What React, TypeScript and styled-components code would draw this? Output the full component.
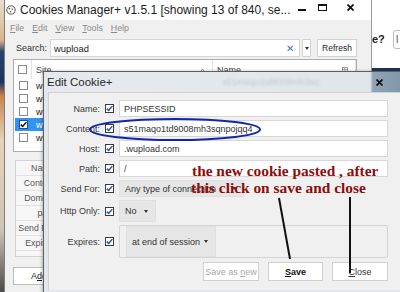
import React from "react";
import styled, { createGlobalStyle } from "styled-components";

const GlobalStyle = createGlobalStyle`
  html, body { margin: 0; padding: 0; background: #fff; }
  * { box-sizing: border-box; }
`;

const Stage = styled.div`
  position: relative;
  width: 400px;
  height: 292px;
  overflow: hidden;
  display: flex;
  font-family: "Liberation Sans", Arial, sans-serif;
  color: #333;
`;

const Desktop = styled.div`
  flex: none;
  width: 4px;
  background: linear-gradient(
    180deg,
    #e8ddd0 0px,
    #d9b58e 40px,
    #27436f 52px,
    #1c355e 82px,
    #c9844a 96px,
    #e4d2bc 140px,
    #cfc4b6 230px,
    #4a4a4a 292px
  );
`;

/* ---------- main window ---------- */

const Window = styled.div`
  flex: none;
  width: 368px;
  display: flex;
  flex-direction: column;
  background: #f0f0f0;
  border-left: 1px solid #7d7d7d;
  border-right: 1px solid #9a9a9a;
`;

const TitleBar = styled.div`
  height: 20px;
  display: flex;
  align-items: center;
  background: #fff;
`;

const AppIcon = styled.svg`
  flex: none;
  margin-left: 1px;
`;

const Title = styled.span`
  flex: 1 1 auto;
  min-width: 0;
  margin-left: 4px;
  font-size: 12px;
  color: #1b1b1b;
  white-space: nowrap;
  overflow: hidden;
`;

const Controls = styled.div`
  flex: none;
  display: flex;
  padding-right: 11px;
`;

const Ctl = styled.div<{ $gap?: number }>`
  width: 20px;
  height: 20px;
  margin-left: ${(p) => p.$gap ?? 0}px;
  display: flex;
  align-items: center;
  justify-content: center;
`;

const MinGlyph = styled.span`
  width: 8px;
  height: 2px;
  background: #111;
`;

const MaxGlyph = styled.span`
  width: 9px;
  height: 7px;
  margin-bottom: 6px;
  border: 1px solid #111;
  border-top-width: 2px;
`;

const MenuBar = styled.div`
  height: 16px;
  display: flex;
  align-items: center;
  gap: 8px;
  padding-left: 5px;
  font-size: 8.8px;
  color: #8a8a8a;
`;

const SearchRow = styled.div`
  margin-top: 3px;
  height: 18px;
  display: flex;
  align-items: center;
  padding-left: 11px;
  font-size: 9px;
`;

const SearchLabel = styled.span`
  width: 34px;
  color: #333;
`;

const SearchInput = styled.div`
  width: 250px;
  height: 18px;
  display: flex;
  align-items: center;
  padding: 0 5px 0 3px;
  background: #fff;
  border: 1px solid #d6d6d6;
  color: #222;
  font-size: 9.4px;
`;

const Clear = styled.span`
  margin-left: auto;
  color: #3b6fc0;
  font-size: 10px;
`;

const SmallBtn = styled.div<{ $w: number; $gap: number }>`
  width: ${(p) => p.$w}px;
  height: 18px;
  margin-left: ${(p) => p.$gap}px;
  display: flex;
  align-items: center;
  justify-content: center;
  background: #fff;
  border: 1px solid #d2d2d2;
  font-size: 8.5px;
  color: #222;
`;

const Arrow = styled.span`
  width: 0;
  height: 0;
  border-left: 2.5px solid transparent;
  border-right: 2.5px solid transparent;
  border-top: 3px solid #333;
`;

const Table = styled.div`
  margin: 2px 0 0 8px;
  width: 344px;
  height: 93px;
  background: #fff;
  border: 1px solid #adadad;
  font-size: 9px;
`;

const HeadRow = styled.div`
  height: 19px;
  display: flex;
  align-items: center;
  color: #444;
`;

const CheckCell = styled.div<{ $sep?: boolean }>`
  flex: none;
  width: 18px;
  height: 100%;
  display: flex;
  align-items: center;
  justify-content: center;
  border-right: 1px solid ${(p) => (p.$sep ? "#e3e3e3" : "transparent")};
`;

const HeadCell = styled.div<{ $w?: number }>`
  ${(p) => (p.$w ? `width: ${p.$w}px; flex: none;` : "flex: 1;")}
  height: 100%;
  display: flex;
  align-items: center;
  padding: 0 4px;
  border-right: 1px solid #e3e3e3;
`;

const SortMark = styled.svg`
  margin-left: auto;
  margin-right: 3px;
`;

const Picker = styled.svg`
  margin-left: auto;
  margin-right: 3px;
`;

const Row = styled.div<{ $sel?: boolean }>`
  height: 13px;
  margin-left: 1px;
  display: flex;
  align-items: center;
  background: ${(p) => (p.$sel ? "#3393f0" : "transparent")};
  color: ${(p) => (p.$sel ? "#fff" : "#222")};
`;

const RowText = styled.span`
  padding-left: 3px;
  white-space: nowrap;
`;

const CheckBox = styled.span<{ $border: string }>`
  flex: none;
  width: 9px;
  height: 9px;
  display: flex;
  align-items: center;
  justify-content: center;
  background: #fff;
  border: 1px solid ${(p) => p.$border};
`;

const Details = styled.div`
  margin: 8px 0 0 10px;
  width: 200px;
  padding-bottom: 5px;
  background: #f7f7f7;
  border: 1px solid #d3d3d3;
`;

const DetailRow = styled.div`
  height: 15px;
  display: flex;
  align-items: center;
  border-bottom: 1px solid #e2e2e2;
`;

const DetailLabel = styled.span`
  width: 41px;
  text-align: right;
  font-size: 8.8px;
  color: #555;
  white-space: nowrap;
`;

const AddButton = styled.div`
  margin: 10px 0 0 8px;
  width: 52px;
  height: 18px;
  display: flex;
  align-items: center;
  justify-content: center;
  background: #fff;
  border: 1px solid #bdbdbd;
  font-size: 9px;
  color: #222;
`;

/* ---------- web page behind ---------- */

const Page = styled.div`
  flex: 1;
  display: flex;
  flex-direction: column;
  background: #dfe4ea;
`;

const PageTop = styled.div`
  height: 68px;
  display: flex;
  align-items: flex-start;
  padding-top: 30px;
  background: #fff;
`;

const PageText = styled.span`
  font-size: 11px;
  font-weight: bold;
  line-height: 18px;
  color: #222;
`;

const PageField = styled.div`
  margin-left: 8px;
  width: 24px;
  height: 19px;
  border: 1px solid #bdbdbd;
  border-radius: 3px;
  background: #fff;
  font-size: 10px;
  line-height: 17px;
  padding-left: 2px;
  color: #555;
`;

const NavyBar = styled.div`
  height: 5px;
  background: #1b355c;
`;

/* ---------- edit dialog ---------- */

const Dialog = styled.div`
  position: absolute;
  left: 43px;
  top: 71px;
  width: 366px;
  height: 224px;
  display: flex;
  flex-direction: column;
  background: #e3e7eb;
  border: 1px solid #5e5e5e;
  box-shadow: -1px 0 3px rgba(0, 0, 0, 0.25);
`;

const DialogTitle = styled.div`
  position: relative;
  height: 20px;
  display: flex;
  align-items: center;
  background: linear-gradient(
    90deg,
    #e6eaee 0px,
    #e1e6eb 326px,
    #8fa3b5 329px,
    #7f95a8 364px
  );
`;

const DialogName = styled.span`
  margin-left: 3px;
  font-size: 11.5px;
  color: #2a2a2a;
`;

const GlassBlur = styled.span`
  margin-left: 110px;
  font-size: 9px;
  color: #c3cad1;
  filter: blur(1px);
  white-space: nowrap;
`;

const CloseGlyph = styled.svg`
  margin-left: auto;
  margin-right: 25px;
`;

const DialogBody = styled.div`
  flex: 1;
  display: flex;
  padding: 0 0 4px 4px;
`;

const Panel = styled.div`
  flex: 1;
  padding-top: 7px;
  background: #f0f0f0;
  border-left: 1px solid #cdd1d5;
  border-top: 1px solid #cdd1d5;
  display: grid;
  grid-template-columns: 51px 9px 269px;
  grid-template-rows: 17px 17px 17px 17px 17px 22px 33px 19px;
  column-gap: 5px;
  row-gap: 3px;
  align-content: start;
  align-items: center;
  font-size: 9px;
`;

const FieldLabel = styled.span`
  text-align: right;
  color: #3a3a3a;
  white-space: nowrap;
`;

const TextField = styled.div`
  height: 17px;
  display: flex;
  align-items: center;
  padding-left: 4px;
  background: #fff;
  border: 1px solid #d7d7d7;
  color: #333;
  white-space: nowrap;
`;

const Select = styled.div<{ $w: number }>`
  width: ${(p) => p.$w}px;
  height: 100%;
  display: flex;
  align-items: center;
  justify-content: space-between;
  padding: 0 7px 0 5px;
  background: #e6e6e6;
  border: 1px solid #e0e0e0;
  color: #333;
  white-space: nowrap;
`;

const Group = styled.div`
  height: 100%;
  display: flex;
  align-items: center;
  padding-left: 6px;
  border: 1px solid #d4d4d4;
  border-radius: 2px;
`;

const ButtonRow = styled.div`
  grid-column: 3;
  height: 100%;
  display: flex;
  justify-content: flex-end;
  gap: 9px;
  margin-top: 2px;
`;

const DlgButton = styled.div<{ $w: number; $tone: string; $bold?: boolean }>`
  width: ${(p) => p.$w}px;
  height: 19px;
  display: flex;
  align-items: center;
  justify-content: center;
  background: #fff;
  border: 1px solid #d0d0d0;
  color: ${(p) => p.$tone};
  font-weight: ${(p) => (p.$bold ? "bold" : "normal")};
`;

/* ---------- annotations ---------- */

const Marks = styled.svg`
  position: absolute;
  left: 0;
  top: 0;
  pointer-events: none;
`;

const Note = styled.div`
  position: absolute;
  left: 191px;
  top: 162px;
  font-family: "Liberation Serif", "Times New Roman", serif;
  font-weight: bold;
  font-size: 15.4px;
  line-height: 17px;
  color: #8e0c0c;
  white-space: nowrap;
  pointer-events: none;
`;

const NoteLine = styled.div<{ $indent?: number }>`
  padding-left: ${(p) => p.$indent ?? 0}px;
`;

const Check = ({ on, border, tone }: { on?: boolean; border: string; tone: string }) => (
  <CheckBox $border={border}>
    {on && (
      <svg width="7" height="7" viewBox="0 0 7 7">
        <path d="M0.8 3.6 L2.7 5.5 L6.3 1.1" fill="none" stroke={tone} strokeWidth="1.5" />
      </svg>
    )}
  </CheckBox>
);

const rows = [false, false, false, true, false];
const details = ["Name:", "Content:", "Domain:", "path:", "Send For:", "Expires:"];

const App = (): JSX.Element => {
  return (
    <Stage>
      <GlobalStyle />
      <Desktop />

      <Window>
        <TitleBar>
          <AppIcon width="10" height="10" viewBox="0 0 10 10">
            <circle cx="5" cy="5" r="4.2" fill="#fff" stroke="#555" strokeWidth="1" />
            <circle cx="3.4" cy="3.6" r="0.9" fill="#555" />
            <circle cx="6.4" cy="4.2" r="0.8" fill="#555" />
            <circle cx="4.6" cy="6.8" r="0.8" fill="#555" />
          </AppIcon>
          <Title>Cookies Manager+ v1.5.1 [showing 13 of 840, se...</Title>
          <Controls>
            <Ctl>
              <MinGlyph />
            </Ctl>
            <Ctl>
              <MaxGlyph />
            </Ctl>
            <Ctl $gap={8}>
              <svg width="7" height="7" viewBox="0 0 7 7" style={{ marginBottom: 6 }}>
                <path d="M0.5 0.5 L6.5 6.5 M6.5 0.5 L0.5 6.5" stroke="#111" strokeWidth="1.8" />
              </svg>
            </Ctl>
          </Controls>
        </TitleBar>

        <MenuBar>
          <span><u>F</u>ile</span>
          <span><u>E</u>dit</span>
          <span><u>V</u>iew</span>
          <span><u>T</u>ools</span>
          <span><u>H</u>elp</span>
        </MenuBar>

        <SearchRow>
          <SearchLabel>Search:</SearchLabel>
          <SearchInput>
            wupload
            <Clear>✕</Clear>
          </SearchInput>
          <SmallBtn $w={9} $gap={2}>
            <Arrow />
          </SmallBtn>
          <SmallBtn $w={40} $gap={6}>Refresh</SmallBtn>
        </SearchRow>

        <Table>
          <HeadRow>
            <CheckCell $sep>
              <Check border="#8a8a8a" tone="#333" />
            </CheckCell>
            <HeadCell $w={181}>
              Site
              <SortMark width="5" height="4" viewBox="0 0 5 4">
                <path d="M0.5 3.5 L2.5 1 L4.5 3.5" fill="none" stroke="#888" strokeWidth="0.9" />
              </SortMark>
            </HeadCell>
            <HeadCell>
              Name
              <Picker width="6" height="6" viewBox="0 0 6 6">
                <rect x="0.5" y="0.5" width="5" height="5" fill="none" stroke="#888" strokeWidth="0.8" />
                <path d="M0.5 2.5 H5.5 M3 0.5 V5.5" stroke="#888" strokeWidth="0.7" />
              </Picker>
            </HeadCell>
          </HeadRow>
          {rows.map((sel, i) => (
            <Row key={i} $sel={sel}>
              <CheckCell>
                <Check on={sel} border={sel ? "#1d4f8f" : "#8a8a8a"} tone="#111" />
              </CheckCell>
              <RowText>wupload.com</RowText>
            </Row>
          ))}
        </Table>

        <Details>
          {details.map((d) => (
            <DetailRow key={d}>
              <DetailLabel>{d}</DetailLabel>
            </DetailRow>
          ))}
        </Details>

        <AddButton>
          A<u>d</u>d
        </AddButton>
      </Window>

      <Page>
        <PageTop>
          <PageText>e?</PageText>
          <PageField>I</PageField>
        </PageTop>
        <NavyBar />
      </Page>

      <Dialog>
        <DialogTitle>
          <DialogName>Edit Cookie+</DialogName>
          <GlassBlur>s51maqo1td9008mh3sq</GlassBlur>
          <CloseGlyph width="7" height="7" viewBox="0 0 7 7">
            <path d="M0.5 0.5 L6.5 6.5 M6.5 0.5 L0.5 6.5" stroke="#111" strokeWidth="1.8" />
          </CloseGlyph>
        </DialogTitle>
        <DialogBody>
          <Panel>
            <FieldLabel>Name:</FieldLabel>
            <Check on border="#3c3c3c" tone="#2458a6" />
            <TextField>PHPSESSID</TextField>

            <FieldLabel>Content:</FieldLabel>
            <Check on border="#3c3c3c" tone="#2458a6" />
            <TextField>s51maqo1td9008mh3sqnpojqq4</TextField>

            <FieldLabel>Host:</FieldLabel>
            <Check on border="#3c3c3c" tone="#2458a6" />
            <TextField>.wupload.com</TextField>

            <FieldLabel>Path:</FieldLabel>
            <Check on border="#3c3c3c" tone="#2458a6" />
            <TextField>/</TextField>

            <FieldLabel>Send For:</FieldLabel>
            <Check on border="#3c3c3c" tone="#2458a6" />
            <Select $w={125}>
              Any type of connection
              <Arrow />
            </Select>

            <FieldLabel>Http Only:</FieldLabel>
            <Check on border="#3c3c3c" tone="#2458a6" />
            <Select $w={37}>
              No
              <Arrow />
            </Select>

            <FieldLabel>Expires:</FieldLabel>
            <Check on border="#3c3c3c" tone="#2458a6" />
            <Group>
              <Select $w={90}>
                at end of session
                <Arrow />
              </Select>
            </Group>

            <ButtonRow>
              <DlgButton $w={56} $tone="#a8a8a8">
                Save as&nbsp;<u>n</u>ew
              </DlgButton>
              <DlgButton $w={55} $tone="#111" $bold>
                <u>S</u>ave
              </DlgButton>
              <DlgButton $w={56} $tone="#333">
                <u>C</u>lose
              </DlgButton>
            </ButtonRow>
          </Panel>
        </DialogBody>
      </Dialog>

      <Marks width="400" height="292" viewBox="0 0 400 292">
        <ellipse cx="175" cy="129.5" rx="85" ry="10.5" fill="none" stroke="#1426a8" strokeWidth="2" />
        <line x1="279" y1="198" x2="290" y2="259" stroke="#111" strokeWidth="2" />
        <line x1="350" y1="197" x2="350" y2="273" stroke="#111" strokeWidth="2" />
      </Marks>

      <Note>
        <NoteLine $indent={1}>the new cookie pasted , after</NoteLine>
        <NoteLine>this click on save and close</NoteLine>
      </Note>
    </Stage>
  );
};

export default App;
